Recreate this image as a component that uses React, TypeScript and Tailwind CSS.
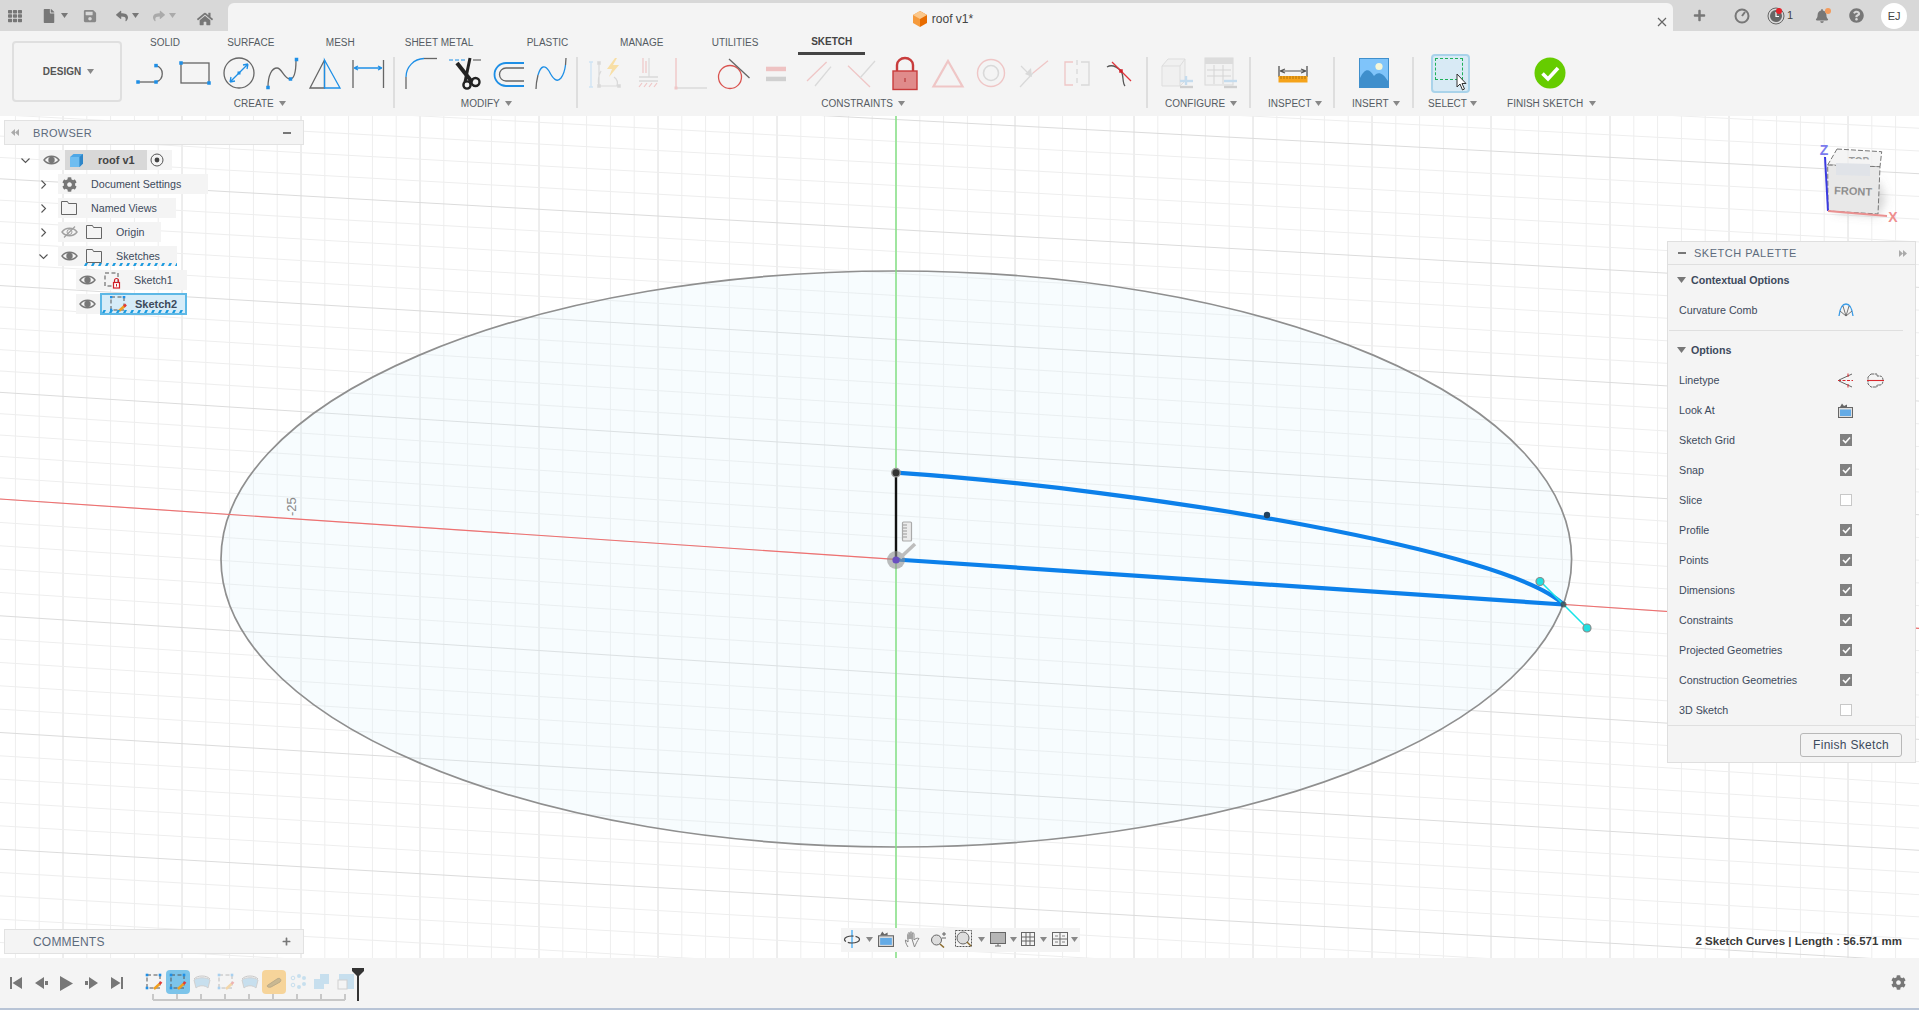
import React from "react";
import { FaTh, FaFile, FaSave, FaReply, FaShare, FaHome, FaPlus, FaBell, FaQuestionCircle, FaCog } from "react-icons/fa";

const B = "#1e8fe6";
const G = "#666666";
const RF = "#efc6c6";
const GF = "#d9d9d9";

function Caret({ c = "#888888" }: { c?: string }) {
  return (
    <svg width="7" height="5" viewBox="0 0 7 5" className="flex-none">
      <path d="M0 0H7L3.5 5Z" fill={c} />
    </svg>
  );
}

function Tool({ children, narrow }: { children: React.ReactNode; narrow?: boolean }) {
  return (
    <div className={"flex h-10 flex-none items-center justify-center " + (narrow ? "w-[42.9px]" : "w-[43.3px]")}>
      <svg width="32" height="32" viewBox="0 0 32 32" fill="none" className="overflow-visible">
        {children}
      </svg>
    </div>
  );
}

function Sq({ x, y, s = 3.5, c = B }: { x: number; y: number; s?: number; c?: string }) {
  return <rect x={x - s / 2} y={y - s / 2} width={s} height={s} fill={c} />;
}

function Group({ className, labelClass, label, children, caretGap }: { className: string; labelClass: string; label: string; children: React.ReactNode; caretGap?: string }) {
  return (
    <div className={"flex flex-none flex-col " + className}>
      <div className="flex h-10 items-center">{children}</div>
      <div className={"flex h-5 items-center whitespace-nowrap text-[10px] text-[#555b62] " + labelClass}>
        <span className={caretGap ?? "mr-[5px]"}>{label}</span>
        <Caret />
      </div>
    </div>
  );
}

function Divider({ className }: { className: string }) {
  return <div className={"mt-1 h-[51px] w-0.5 flex-none bg-[#dedede] " + className} />;
}

function Tab({ w, children, active }: { w: string; children: string; active?: boolean }) {
  return (
    <div className={"flex h-[22px] flex-none items-start justify-center " + w}>
      {active ? (
        <span className="flex h-6 w-[67px] items-center justify-center border-b-[3px] border-[#444444] text-[10px] font-bold text-[#444444]">{children}</span>
      ) : (
        <span className="flex h-[22px] items-center text-[10px] text-[#555b62]">{children}</span>
      )}
    </div>
  );
}

function Eye({ off }: { off?: boolean }) {
  const c = off ? "#a0a0a0" : "#777777";
  return (
    <svg width="17" height="12" viewBox="0 0 17 12" fill="none">
      <path d="M1 6C4.5 1 12.5 1 16 6C12.5 11 4.5 11 1 6Z" stroke={c} strokeWidth="1.4" />
      {off ? <path d="M3 11.5L14 .5" stroke={c} strokeWidth="1.2" /> : <circle cx="8.5" cy="6" r="3.2" fill={c} />}
      {off && <circle cx="8.5" cy="6" r="2.5" stroke={c} />}
    </svg>
  );
}

function Folder() {
  return (
    <svg width="16" height="14" viewBox="0 0 16 14" fill="none">
      <path d="M.5 .5H6.5L7.5 2.5H15.5V13.5H.5Z" stroke="#666666" strokeWidth="1" />
    </svg>
  );
}

function Hatch({ className }: { className: string }) {
  const xs = Array.from({ length: 14 }, (_, i) => i * 7);
  return (
    <svg width="96" height="3" viewBox="0 0 96 3" className={"absolute overflow-hidden " + className}>
      {xs.map((x) => (
        <path key={x} d={`M${x} 3L${x + 1.5} 0H${x + 4}L${x + 2.5} 3Z`} fill="#1c9be0" />
      ))}
    </svg>
  );
}

function SketchIcon({ lock, selected }: { lock?: boolean; selected?: boolean }) {
  return (
    <svg width="17" height="17" viewBox="0 0 17 17" fill="none">
      <rect x="1" y="1" width="13" height="13" stroke="#555555" strokeDasharray="4 2.5" />
      {selected ? (
        <>
          <Sq x={1} y={1} s={2.6} />
          <Sq x={14} y={1} s={2.6} />
          <Sq x={1} y={14} s={2.6} />
          <path d="M9 15L15 9.5" stroke="#f0a020" strokeWidth="2.5" />
          <path d="M14 10.5L16 8.5" stroke="#e23a3a" strokeWidth="2.5" />
        </>
      ) : (
        <>
          <path d="M10.5 10.5V8.5A2 2 0 0 1 14.5 8.5V10.5" stroke="#d0202a" strokeWidth="1.2" />
          <rect x="9.5" y="10.5" width="6" height="5.5" fill="#fff" stroke="#d0202a" strokeWidth="1.2" />
          <path d="M12.5 12V14.5" stroke="#d0202a" />
        </>
      )}
    </svg>
  );
}

function Grid() {
  const v: React.ReactNode[] = [];
  for (let k = -38; k <= 43; k++) {
    const x = 896 + k * 23.8;
    if (x < 0 || x > 1919) continue;
    v.push(<line key={"v" + k} x1={x} y1={116} x2={x} y2={958} stroke={k % 5 === 0 ? "#dcdcdc" : "#eeeeee"} strokeWidth="1" />);
  }
  const h: React.ReactNode[] = [];
  for (let n = -25; n <= 20; n++) {
    const k = n / 5;
    const step = k < 0 ? 110 : 114;
    const slope = k < 0 ? 0.0674 + 0.0036 * k : 0.0674 - 0.003 * k;
    const yc = 559.5 + k * step;
    h.push(<line key={"h" + n} x1={0} y1={yc - 896 * slope} x2={1919} y2={yc + 1023 * slope} stroke={n % 5 === 0 ? "#dcdcdc" : "#eeeeee"} strokeWidth="1" />);
  }
  return (
    <>
      {v}
      {h}
    </>
  );
}

function Viewport() {
  return (
    <svg className="absolute inset-0 h-full w-full" viewBox="0 116 1919 842" fill="none">
      <defs>
        <filter id="cubeShadow" x="-40%" y="-40%" width="180%" height="180%">
          <feGaussianBlur stdDeviation="5" />
        </filter>
        <clipPath id="topFace">
          <path d="M1837 149L1881.7 151.7L1880 160L1830 158Z" />
        </clipPath>
      </defs>
      <Grid />
      <ellipse cx="896.3" cy="559" rx="675.3" ry="288" fill="#dcf1fb" fillOpacity="0.24" stroke="#8f8f8f" strokeWidth="1.7" />
      <line x1="0" y1="499" x2="1919" y2="628.4" stroke="#f07070" strokeWidth="1.2" />
      <line x1="896" y1="116" x2="896" y2="958" stroke="#7fe27f" strokeWidth="1.4" />
      <text x="0" y="0" transform="translate(296 516) rotate(-90)" fill="#888888" fontSize="13">-25</text>
      <path d="M896 472.7V559.5" stroke="#111111" strokeWidth="2.4" />
      <path d="M896 472.7C1150 490 1510 551 1563.5 604.5" stroke="#0c80ea" strokeWidth="4.2" />
      <path d="M896 559.5L1563.5 604.5" stroke="#0c80ea" strokeWidth="4.2" />
      <path d="M1540 581L1587 628" stroke="#18e4e8" strokeWidth="1.6" />
      <circle cx="1540" cy="581.5" r="4" fill="#20dfe0" stroke="#8a8a8a" strokeWidth="1.2" />
      <circle cx="1587" cy="628" r="4" fill="#20dfe0" stroke="#8a8a8a" strokeWidth="1.2" />
      <circle cx="1563.5" cy="604.5" r="3" fill="#444444" fillOpacity="0.75" />
      <circle cx="1267" cy="515" r="3.2" fill="#22425f" />
      <circle cx="896" cy="472.7" r="4.2" fill="#333333" stroke="#999999" strokeWidth="1.4" />
      <circle cx="896" cy="560" r="9" fill="#8f8f8f" fillOpacity="0.6" />
      <circle cx="896" cy="560" r="3.6" fill="#6a4fc0" />
      <path d="M900 558L915 544" stroke="#bdbdbd" strokeWidth="3.5" />
      <rect x="902.5" y="522" width="9" height="19" rx="1" fill="#ebebeb" stroke="#aaaaaa" strokeWidth="1.2" />
      <path d="M903 525H907M903 528H907M903 531H907M903 534H907M903 537H907" stroke="#999999" strokeWidth="1" />
      {/* view cube */}
      <path d="M1832 212L1878 216L1886 200L1878 180Z" fill="#777777" fillOpacity="0.3" filter="url(#cubeShadow)" />
      <path d="M1837 149L1881.7 151.7L1880 166.7L1827.7 165Z" fill="#efefef" fillOpacity="0.7" stroke="#777777" strokeDasharray="5 2" />
      <path d="M1827.7 165L1880 166.7L1878 214L1828 211Z" fill="#e8e8e8" stroke="#777777" strokeDasharray="5 2" />
      <path d="M1836 163L1870 164V176L1836 175Z" fill="#e0e3e8" />
      <g clipPath="url(#topFace)">
        <text x="1859" y="165" textAnchor="middle" fontSize="10" fontWeight="700" fill="#9a9a9a">TOP</text>
      </g>
      <text x="1853" y="195" textAnchor="middle" fontSize="11" fontWeight="700" fill="#8f8f8f" transform="rotate(2 1853 195)">FRONT</text>
      <path d="M1825 157L1828 211" stroke="#3a3ae0" strokeWidth="2" />
      <path d="M1828 211L1887 216" stroke="#ea9090" strokeWidth="2" />
      <text x="1824" y="155" textAnchor="middle" fontSize="14" fontWeight="700" fill="#7b7bee">Z</text>
      <text x="1893" y="222" textAnchor="middle" fontSize="14" fontWeight="700" fill="#ee8f8f">X</text>
    </svg>
  );
}

function TopBar() {
  return (
    <div className="flex h-[31px] flex-none bg-[#d8d8d8]">
      <div className="flex w-[228px] flex-none items-center text-[#777777]">
        <FaTh className="ml-2 flex-none text-[14px]" />
        <FaFile className="ml-[20px] flex-none text-[14px]" />
        <span className="ml-[5px]"><Caret c="#777777" /></span>
        <FaSave className="ml-[15px] flex-none text-[14px] text-[#888888]" />
        <FaReply className="ml-[19px] flex-none text-[12px]" />
        <span className="ml-[4px]"><Caret c="#777777" /></span>
        <FaShare className="ml-[14px] flex-none text-[12px] text-[#aaaaaa]" />
        <span className="ml-[4px]"><Caret c="#aaaaaa" /></span>
        <FaHome className="ml-[21px] mt-[6px] flex-none text-[16px]" />
      </div>
      <div className="mt-[3px] flex w-[1445px] flex-none items-center justify-center rounded-t-md bg-[#f4f4f4]">
        <svg width="14" height="16" viewBox="0 0 14 16" className="mr-[5px] mt-[3px]">
          <path d="M7 0L14 4V12L7 16Z" fill="#e86c00" />
          <path d="M7 0L0 4V12L7 16Z" fill="#f59a3c" />
          <path d="M7 0L14 4L7 8L0 4Z" fill="#fbc78a" />
        </svg>
        <span className="mr-[15px] mt-[3px] text-xs text-[#444444]">roof v1*</span>
      </div>
      <div className="relative flex flex-1 items-center text-[#777777]">
        <svg width="10" height="10" viewBox="0 0 10 10" className="absolute -left-[16px] top-[17px]">
          <path d="M1 1L9 9M9 1L1 9" stroke="#666666" strokeWidth="1.2" />
        </svg>
        <FaPlus className="ml-[20px] flex-none text-[13px]" />
        <svg width="16" height="16" viewBox="0 0 16 16" className="ml-[28px] flex-none">
          <circle cx="8" cy="8" r="6.5" fill="none" stroke="#777777" strokeWidth="2" />
          <path d="M8 8L11 4" stroke="#777777" strokeWidth="2" />
        </svg>
        <svg width="18" height="18" viewBox="0 0 18 18" className="ml-[17px] flex-none">
          <circle cx="9" cy="9" r="8" fill="none" stroke="#666666" />
          <circle cx="9" cy="9" r="6" fill="#666666" />
          <path d="M9 5V9.5H12" stroke="#fff" strokeWidth="1.2" fill="none" />
          <circle cx="12" cy="4" r="3" fill="#e4232a" />
        </svg>
        <span className="ml-[2px] text-[11px] text-[#444444]">1</span>
        <span className="relative ml-[22px] flex-none">
          <FaBell className="text-[14px]" />
          <span className="absolute -right-[2px] -top-[1px] h-[6px] w-[6px] rounded-full bg-[#f39b5c]" />
        </span>
        <FaQuestionCircle className="ml-[20px] flex-none text-[15px]" />
        <div className="ml-[17px] mt-[1px] flex h-[26px] w-[26px] flex-none items-center justify-center rounded-full bg-white text-[11px] text-[#444444]">EJ</div>
      </div>
    </div>
  );
}

function Toolbar() {
  return (
    <div className="relative flex h-[85px] flex-none bg-[#f4f4f4]">
      <div className="ml-[11.5px] mt-[10px] flex h-[61px] w-[110px] flex-none items-center justify-center gap-[6px] rounded border-2 border-[#dfdfdf] pl-1 text-[10px] font-bold text-[#555555]">
        <span>DESIGN</span>
        <Caret />
      </div>
      <div className="ml-[0.5px] flex flex-col">
        <div className="flex h-[22px]">
          <Tab w="w-[86px]">SOLID</Tab>
          <Tab w="w-[85.5px]">SURFACE</Tab>
          <Tab w="w-[93.5px]">MESH</Tab>
          <Tab w="w-[104px]">SHEET METAL</Tab>
          <Tab w="w-[113px]">PLASTIC</Tab>
          <Tab w="w-[75.5px]">MANAGE</Tab>
          <Tab w="w-[111px]">UTILITIES</Tab>
          <Tab w="w-[82.5px]" active>SKETCH</Tab>
        </div>
        <div className="flex">
          <Group className="ml-[8.35px] w-[261.5px]" labelClass="pl-[103.5px]" label="CREATE">
            <Tool>
              <path d="M2 25H20" stroke={G} strokeWidth="1.3" />
              <path d="M20 8.6A8.5 8.5 0 0 1 20 25" stroke={G} strokeWidth="1.3" />
              <Sq x={2} y={25} />
              <Sq x={20} y={25} />
              <Sq x={20} y={8.6} />
            </Tool>
            <Tool>
              <rect x="2" y="6" width="28" height="20" stroke={G} strokeWidth="1.3" />
              <Sq x={2} y={6} />
              <Sq x={30} y={26} />
            </Tool>
            <Tool>
              <circle cx="16" cy="16" r="15" stroke={G} strokeWidth="1.3" />
              <path d="M7 25L25 7M7 25L8 20M7 25L12 24M25 7L24 12M25 7L20 8" stroke={B} strokeWidth="1.3" />
              <Sq x={16} y={16} s={3} />
            </Tool>
            <Tool>
              <path d="M2 30C2 18 6 11 11 11C16 11 18 22 24 22C28 22 30 14 30 3" stroke={G} strokeWidth="1.3" />
              <Sq x={2} y={30.5} />
              <Sq x={24.5} y={22} />
              <Sq x={30.5} y={2.5} />
            </Tool>
            <Tool>
              <path d="M15.5 3L1 31H15.5Z" stroke={G} strokeWidth="1.3" />
              <path d="M15.5 3L31 31H15.5Z" stroke={B} strokeWidth="1.3" />
            </Tool>
            <Tool>
              <path d="M1 3V31M31.5 3V31" stroke={G} strokeWidth="1.3" />
              <path d="M2 11H30M2 11L6 9M2 11L6 13M30 11L26 9M30 11L26 13" stroke={B} strokeWidth="1.3" />
            </Tool>
          </Group>
          <Divider className="ml-[1.15px]" />
          <Group className="ml-[4.85px] w-[173.2px]" labelClass="pl-[61px]" label="MODIFY">
            <Tool>
              <path d="M1 32V20" stroke={G} strokeWidth="1.3" />
              <path d="M1 20A18.5 18.5 0 0 1 19 1.5" stroke={B} strokeWidth="1.3" />
              <path d="M19 1.5H32" stroke={G} strokeWidth="1.3" />
            </Tool>
            <Tool>
              <path d="M0 3H17" stroke={B} strokeWidth="1.2" strokeDasharray="4 2" />
              <path d="M24 3H32" stroke={G} strokeWidth="1.2" />
              <path d="M8 6L23 25" stroke="#222222" strokeWidth="4" />
              <path d="M21 1L16 25" stroke="#222222" strokeWidth="3" />
              <circle cx="26.5" cy="25" r="4" stroke="#222222" strokeWidth="2.4" />
              <circle cx="18" cy="28" r="3.6" stroke="#222222" strokeWidth="2.4" />
            </Tool>
            <Tool>
              <path d="M32 6H14A11.5 11.5 0 0 0 14 29H32" stroke={B} strokeWidth="1.8" />
              <path d="M32 11H14A6.5 6.5 0 0 0 14 24H32" stroke={G} strokeWidth="1.3" />
            </Tool>
            <Tool>
              <path d="M1 32C1 26 2 22 3 18M30.5 8L31 1" stroke={G} strokeWidth="1.3" />
              <path d="M3 18C6 8 10 8 14 14C18 22 22 26 26 21C29 17 30 12 30.5 8" stroke={B} strokeWidth="1.3" />
            </Tool>
          </Group>
          <Divider className="ml-[3px]" />
          <Group className="ml-[5.35px] w-[563px]" labelClass="pl-[238px]" label="CONSTRAINTS">
            <Tool narrow>
              <path d="M2 5V30M0 5H4M0 30H4" stroke="#cfe4f4" strokeWidth="1.3" />
              <path d="M10 7V29H30M10 29A20 20 0 0 1 12 14M25 20A8 8 0 0 1 28 29" stroke={GF} strokeWidth="1.2" />
              <Sq x={10} y={6} c={GF} />
              <Sq x={10} y={29} c={GF} />
              <Sq x={30} y={29} c={GF} />
              <path d="M26 1L18 12H23L20 20L30 8H24L28 1Z" fill="#f8dfa6" />
            </Tool>
            <Tool narrow>
              <path d="M11 1V16M14 4V16" stroke={RF} strokeWidth="1.2" />
              <path d="M17 1V20" stroke={GF} strokeWidth="1.2" />
              <path d="M7 20H26M7 24H26" stroke={GF} strokeWidth="1.3" />
              <path d="M7 30L10 26M12 30L15 26M17 30L20 26M22 30L25 26" stroke={RF} strokeWidth="1.2" />
            </Tool>
            <Tool narrow>
              <path d="M1 1V30" stroke={RF} strokeWidth="1.4" />
              <path d="M2 31H32" stroke={GF} strokeWidth="1.4" />
              <Sq x={1} y={31} s={3} c={RF} />
            </Tool>
            <Tool narrow>
              <circle cx="13" cy="20" r="11.5" stroke="#d9534f" strokeWidth="1.3" />
              <path d="M12 2L32.5 21" stroke="#666666" strokeWidth="1.3" />
            </Tool>
            <Tool narrow>
              <rect x="6" y="9.7" width="20" height="4.5" fill="#eec2c2" />
              <rect x="6" y="19.7" width="20" height="4.5" fill="#d0d0d0" />
            </Tool>
            <Tool narrow>
              <path d="M4 24L23.6 5" stroke={RF} strokeWidth="1.3" />
              <path d="M12 29L28 9.7" stroke={GF} strokeWidth="1.3" />
            </Tool>
            <Tool narrow>
              <path d="M2 8.7L24 30" stroke={RF} strokeWidth="1.3" />
              <path d="M14 21L29 4" stroke={GF} strokeWidth="1.3" />
            </Tool>
            <Tool narrow>
              <path d="M8 14V8A8 7 0 0 1 24 8V14" stroke="#c83c3c" strokeWidth="2.4" />
              <rect x="4" y="14" width="24" height="18.5" fill="#e08b8b" stroke="#c83c3c" strokeWidth="1.4" />
              <path d="M16 21V25" stroke="#b02a2a" strokeWidth="1" />
            </Tool>
            <Tool narrow>
              <path d="M16 4L30.5 29.5H1.5Z" stroke={RF} strokeWidth="2.2" />
            </Tool>
            <Tool narrow>
              <circle cx="16" cy="16" r="13.5" stroke={RF} strokeWidth="1.4" />
              <circle cx="16" cy="16" r="7.5" stroke={GF} strokeWidth="1.6" />
            </Tool>
            <Tool narrow>
              <path d="M2 30L15 16" stroke={GF} strokeWidth="1.3" />
              <path d="M15 16L30 3.7" stroke={RF} strokeWidth="1.3" />
              <path d="M3 9L9 15" stroke={GF} strokeWidth="1.3" />
              <path d="M7 17L13 11L14 20Z" fill={GF} />
            </Tool>
            <Tool narrow>
              <path d="M16 3V29" stroke={GF} strokeWidth="1.3" strokeDasharray="5 4" />
              <path d="M12 5H4V28H12" stroke={RF} strokeWidth="1.3" />
              <path d="M20 5H28V28H20" stroke={GF} strokeWidth="1.3" />
            </Tool>
            <Tool narrow>
              <path d="M4 10C9 7 14 10 18 14C21 18 19 26 22 29" stroke="#555555" strokeWidth="1.3" />
              <path d="M9 5L28 24" stroke="#e0353b" strokeWidth="1.3" />
              <Sq x={18} y={14} c="#d0202a" />
            </Tool>
          </Group>
          <Divider className="" />
          <Group className="ml-[6.7px] w-[88px]" labelClass="pl-[10px]" label="CONFIGURE">
            <Tool>
              <path d="M1 9L7 2H24V24L19 29H1Z" fill="#f0f0f0" stroke="#dddddd" />
              <path d="M1 9H19V29M19 9L24 2" stroke="#dddddd" />
              <path d="M19 24H32" stroke="#c5dcee" strokeWidth="2.4" />
              <path d="M25 19V28" stroke="#c5dcee" strokeWidth="2.4" />
              <path d="M19 30H32" stroke="#cfcfcf" strokeWidth="2.4" />
            </Tool>
            <Tool>
              <rect x="1" y="1" width="28" height="27" fill="#f2f2f2" stroke="#d8d8d8" />
              <rect x="1" y="1" width="28" height="6" fill="#dcdcdc" />
              <path d="M3 13H27M3 19H27M10 8V27M19 8V27" stroke="#d4d4d4" />
              <path d="M20 24H33" stroke="#c5dcee" strokeWidth="2.4" />
              <path d="M20 30H33" stroke="#cfcfcf" strokeWidth="2.4" />
            </Tool>
          </Group>
          <Divider className="ml-1.5" />
          <Group className="ml-[15px] w-[66px]" labelClass="pl-[2px]" label="INSPECT" caretGap="mr-[4px]">
            <div className="ml-[4.85px]">
              <Tool>
                <path d="M2 9V20M30 9V20" stroke="#555555" strokeWidth="1.3" />
                <path d="M3 14H29M3 14L8 12M3 14L8 16M29 14L24 12M29 14L24 16" stroke="#555555" strokeWidth="1.2" />
                <rect x="1.5" y="19" width="29" height="6.5" fill="#f5a31a" />
                <path d="M4 19V22M7 19V22M10 19V22M13 19V22M16 19V22M19 19V22M22 19V22M25 19V22M28 19V22" stroke="#a56a06" strokeWidth=".8" />
              </Tool>
            </div>
          </Group>
          <Divider className="ml-px" />
          <Group className="ml-[15px] w-[62px]" labelClass="pl-[2px]" label="INSERT" caretGap="mr-[4px]">
            <div className="ml-[1.85px]">
              <Tool>
                <rect x="1.5" y="1.5" width="29" height="29" fill="#7fc4fa" stroke="#3f8fcc" />
                <path d="M2 30V21C7 11 11 11 16 19C19 15 24 14 30 24V30Z" fill="#3f8fcc" />
                <circle cx="21" cy="9.5" r="3.6" fill="#f4f6d8" />
              </Tool>
            </div>
          </Group>
          <Divider className="" />
          <Group className="ml-[11px] w-[50px]" labelClass="pl-[3px]" label="SELECT" caretGap="mr-[3px]">
            <div className="relative ml-1.5 mt-px h-[39px] w-[39px] flex-none rounded-sm border-2 border-[#a9d3ea] bg-[#d8eaf5]">
              <div className="ml-[2px] mt-[2px] h-[22px] w-[28px] border border-dashed border-[#1eb15a]" />
              <svg width="11" height="18" viewBox="0 0 11 18" className="absolute left-[23px] top-[17px]">
                <path d="M1 1V14L4 11L6.5 17L8.5 16L6 10.5H10Z" fill="#fff" stroke="#333333" strokeWidth="1" />
              </svg>
            </div>
          </Group>
          <Group className="ml-8 w-[95px]" labelClass="" label="FINISH SKETCH" caretGap="mr-[6px]">
            <div className="ml-[21.35px]">
              <Tool>
                <circle cx="16" cy="16" r="15.5" fill="#66cc00" />
                <path d="M8.5 16.5L14 22L24 11" stroke="#fff" strokeWidth="3.6" />
              </Tool>
            </div>
          </Group>
        </div>
      </div>
    </div>
  );
}

function Chev({ down }: { down?: boolean }) {
  return (
    <svg width="9" height="9" viewBox="0 0 9 9" fill="none">
      <path d={down ? "M.5 2.5L4.5 6.5L8.5 2.5" : "M2.5 .5L6.5 4.5L2.5 8.5"} stroke="#555555" strokeWidth="1.1" />
    </svg>
  );
}

function IconBox({ className, children }: { className: string; children: React.ReactNode }) {
  return <span className={"flex flex-none items-center justify-center " + className}>{children}</span>;
}

function Browser() {
  const txt = "text-[10.7px] text-[#3d4a5c]";
  return (
    <div className="absolute left-1 top-1 flex w-[300px] flex-col">
      <div className="flex h-[25px] items-center border border-[#e2e2e2] bg-[#f4f4f4]">
        <svg width="8" height="7" viewBox="0 0 8 7" className="ml-[6px]">
          <path d="M4 0V7L0 3.5ZM8 0V7L4 3.5Z" fill="#aaaaaa" />
        </svg>
        <span className="ml-[14px] mt-px text-[11px] tracking-[0.3px] text-[#5d6b7c]">BROWSER</span>
        <span className="ml-auto mr-3 h-0.5 w-2 bg-[#777777]" />
      </div>
      <div className="mt-[3px] flex flex-col">
        <div className="flex h-6 items-center">
          <IconBox className="w-9 justify-end pr-2.5"><Chev down /></IconBox>
          <div className="flex h-5 w-[132px] items-center bg-[#f4f4f4]">
            <IconBox className="w-[23px]"><Eye /></IconBox>
            <div className="ml-[2px] flex h-5 w-[82px] flex-none items-center bg-[#d8d8d8]">
              <svg width="15" height="15" viewBox="0 0 15 15" className="ml-[4px] flex-none">
                <path d="M1 4L4.5 1H14V10.5L10.5 14H1Z" fill="#4ea7e6" />
                <path d="M1 4H10.5V14H1Z" fill="#6fbdf0" />
                <path d="M10.5 4L14 1V10.5L10.5 14Z" fill="#2f86c8" />
              </svg>
              <span className="ml-[14px] text-[11px] font-bold text-[#444444]">roof v1</span>
            </div>
            <svg width="14" height="14" viewBox="0 0 14 14" className="ml-[3px] flex-none">
              <circle cx="7" cy="7" r="6" fill="none" stroke="#555555" />
              <circle cx="7" cy="7" r="2.4" fill="#444444" />
            </svg>
          </div>
        </div>
        <div className="flex h-6 items-center">
          <IconBox className="w-[54px] justify-end pr-2.5"><Chev /></IconBox>
          <div className="flex h-5 w-[150px] items-center bg-[#f4f4f4]">
            <IconBox className="w-[22px]"><FaCog className="text-[15px] text-[#777777]" /></IconBox>
            <span className={"ml-[11px] " + txt}>Document Settings</span>
          </div>
        </div>
        <div className="flex h-6 items-center">
          <IconBox className="w-[54px] justify-end pr-2.5"><Chev /></IconBox>
          <div className="flex h-5 w-[118px] items-center bg-[#f4f4f4]">
            <IconBox className="w-[22px]"><Folder /></IconBox>
            <span className={"ml-[11px] " + txt}>Named Views</span>
          </div>
        </div>
        <div className="flex h-6 items-center">
          <IconBox className="w-[54px] justify-end pr-2.5"><Chev /></IconBox>
          <div className="flex h-5 w-[103px] items-center bg-[#f4f4f4]">
            <IconBox className="w-[22px]"><Eye off /></IconBox>
            <IconBox className="ml-[3px] w-[22px]"><Folder /></IconBox>
            <span className={"ml-[11px] " + txt}>Origin</span>
          </div>
        </div>
        <div className="flex h-6 items-center">
          <IconBox className="w-[54px] justify-end pr-2.5"><Chev down /></IconBox>
          <div className="relative flex h-5 w-[119px] items-center overflow-hidden bg-[#f4f4f4]">
            <IconBox className="w-[22px]"><Eye /></IconBox>
            <IconBox className="ml-[3px] w-[22px]"><Folder /></IconBox>
            <span className={"ml-[11px] " + txt}>Sketches</span>
            <Hatch className="bottom-0 left-[26px]" />
          </div>
        </div>
        <div className="flex h-6 items-center">
          <div className="w-[72px] flex-none" />
          <div className="flex h-5 w-[111px] items-center bg-[#f4f4f4]">
            <IconBox className="w-[22px]"><Eye /></IconBox>
            <IconBox className="ml-[3px] w-[22px]"><SketchIcon lock /></IconBox>
            <span className={"ml-[11px] " + txt}>Sketch1</span>
          </div>
        </div>
        <div className="flex h-6 items-center">
          <div className="w-[72px] flex-none" />
          <div className="flex h-5 w-6 flex-none items-center bg-[#f4f4f4]">
            <IconBox className="w-[22px]"><Eye /></IconBox>
          </div>
          <div className="relative flex h-[22px] w-[87px] flex-none items-center overflow-hidden border-2 border-[#5db8e6] bg-[#d6ecf8]">
            <IconBox className="ml-[6px] w-[20px]"><SketchIcon selected /></IconBox>
            <span className="ml-[7px] text-[11px] font-bold text-[#3d4a5c]">Sketch2</span>
            <Hatch className="bottom-0 left-0" />
          </div>
        </div>
      </div>
    </div>
  );
}

function CheckRow({ label, checked = true }: { label: string; checked?: boolean }) {
  return (
    <div className="flex h-[30px] items-center pl-[11px] text-[10.7px] text-[#3d4a5c]">
      <span className="w-[161px] flex-none">{label}</span>
      {checked ? (
        <span className="flex h-3 w-3 items-center justify-center bg-[#808080]">
          <svg width="9" height="8" viewBox="0 0 9 8" fill="none">
            <path d="M1 4L3.5 6.5L8 1.5" stroke="#fff" strokeWidth="1.6" />
          </svg>
        </span>
      ) : (
        <span className="h-3 w-3 border border-[#c8c8c8] bg-white" />
      )}
    </div>
  );
}

function Section({ label }: { label: string }) {
  return (
    <div className="flex h-[30px] items-center pl-[9px] text-[10.7px] font-bold text-[#3d4a5c]">
      <svg width="9" height="6" viewBox="0 0 9 6" className="flex-none">
        <path d="M0 0H9L4.5 6Z" fill="#777777" />
      </svg>
      <span className="ml-[5px]">{label}</span>
    </div>
  );
}

function Palette() {
  return (
    <div className="absolute right-[3px] top-[125px] flex w-[249px] flex-col border border-[#dfdfdf] bg-[#f4f4f4]">
      <div className="flex h-[23px] items-center border-b border-[#dfdfdf]">
        <span className="ml-[10px] h-0.5 w-2 bg-[#777777]" />
        <span className="ml-2 mt-px text-[11px] tracking-[0.5px] text-[#5d6b7c]">SKETCH PALETTE</span>
        <svg width="8" height="7" viewBox="0 0 8 7" className="ml-auto mr-2">
          <path d="M0 0V7L4 3.5ZM4 0V7L8 3.5Z" fill="#aaaaaa" />
        </svg>
      </div>
      <Section label="Contextual Options" />
      <div className="flex h-[30px] items-center pl-[11px] text-[10.7px] text-[#3d4a5c]">
        <span className="w-[159px] flex-none">Curvature Comb</span>
        <svg width="16" height="15" viewBox="0 0 16 15" fill="none">
          <path d="M1 13C2 5 5 1 8 1C11 1 14 5 15 13" stroke="#3a9be6" strokeWidth="1.3" />
          <path d="M2 8L8 13L14 8M5 3L8 13L11 3" stroke="#666666" strokeWidth=".9" />
        </svg>
      </div>
      <div className="ml-px mt-[5px] h-px w-[234px] bg-[#dfdfdf]" />
      <div className="h-1" />
      <Section label="Options" />
      <div className="flex h-[30px] items-center pl-[11px] text-[10.7px] text-[#3d4a5c]">
        <span className="w-[158px] flex-none">Linetype</span>
        <svg width="17" height="17" viewBox="0 0 17 17" fill="none">
          <path d="M1 8.5H16" stroke="#d8282e" strokeWidth="1.1" strokeDasharray="3 1.5" />
          <path d="M15 2L2 8M2 9L15 15" stroke="#666666" />
          <path d="M11 1.5V5M11 12V15.5" stroke="#d8282e" />
        </svg>
        <svg width="17" height="15" viewBox="0 0 17 15" fill="none" className="ml-[13px]">
          <path d="M4 1H10V3H13C15 3 16 5 16 7.5C16 10 15 12 13 12H10V14H4L1 11V4Z" stroke="#666666" strokeDasharray="3 .6" />
          <path d="M0 7.5H17" stroke="#d8282e" strokeWidth="1.1" />
        </svg>
      </div>
      <div className="flex h-[30px] items-center pl-[11px] text-[10.7px] text-[#3d4a5c]">
        <span className="w-[159px] flex-none">Look At</span>
        <svg width="15" height="15" viewBox="0 0 15 15" fill="none">
          <rect x=".5" y="4.5" width="14" height="10" fill="#dddddd" stroke="#666666" />
          <rect x="2" y="6.5" width="11" height="6.5" fill="#64abe6" />
          <path d="M2 4L4 .5L6 3L9 1.5V4Z" fill="#666666" />
        </svg>
      </div>
      <CheckRow label="Sketch Grid" />
      <CheckRow label="Snap" />
      <CheckRow label="Slice" checked={false} />
      <CheckRow label="Profile" />
      <CheckRow label="Points" />
      <CheckRow label="Dimensions" />
      <CheckRow label="Constraints" />
      <CheckRow label="Projected Geometries" />
      <CheckRow label="Construction Geometries" />
      <CheckRow label="3D Sketch" checked={false} />
      <div className="flex h-[37px] items-start justify-end border-t border-[#dfdfdf] pr-[13px] pt-[7px]">
        <button className="h-6 w-[102px] rounded-[3px] border border-[#b8b8b8] text-xs tracking-[0.3px] text-[#3d4a5c]">Finish Sketch</button>
      </div>
    </div>
  );
}

function NavBar() {
  return (
    <div className="absolute left-[841px] top-[812px] flex h-6 w-[239px] items-center bg-[#f4f4f4] pb-[2px]">
      <IconBox className="w-[22px]">
        <svg width="18" height="18" viewBox="0 0 18 18" fill="none">
          <path d="M9 0V18" stroke="#7fc4f5" strokeWidth="2" />
          <ellipse cx="9" cy="9.5" rx="7.5" ry="3.5" stroke="#444444" strokeWidth="1.2" strokeDasharray="13 2" />
        </svg>
      </IconBox>
      <IconBox className="w-3"><Caret /></IconBox>
      <IconBox className="w-[22px]">
        <svg width="16" height="16" viewBox="0 0 15 15" fill="none">
          <rect x=".5" y="4.5" width="14" height="10" fill="#dddddd" stroke="#666666" />
          <rect x="2" y="6.5" width="11" height="6.5" fill="#64abe6" />
          <path d="M2 4L4 .5L6 3L9 1.5V4Z" fill="#666666" />
        </svg>
      </IconBox>
      <IconBox className="ml-1 w-[22px]">
        <svg width="17" height="17" viewBox="0 0 17 17" fill="none">
          <path d="M4 16C2 13 1 10 1.5 9L4 11V3.5M4 8V2.5C5 1 6 2 6 3V8M6 8V1.5C7 .5 8 1 8 2V8M8 8V2.5C9 1.5 10 2 10 3V9C11 8 13 6.5 15 7.5C13 10 12 13 10.5 16Z" stroke="#888888" strokeWidth="1" />
        </svg>
      </IconBox>
      <IconBox className="ml-1 w-[22px]">
        <svg width="17" height="17" viewBox="0 0 17 17" fill="none">
          <circle cx="6.5" cy="9" r="5" fill="#dddddd" stroke="#666666" />
          <path d="M10 13L14 16.5" stroke="#8a6a2a" strokeWidth="1.5" />
          <path d="M12 3H16M14 1V5M12 7H16" stroke="#555555" strokeWidth=".9" />
        </svg>
      </IconBox>
      <IconBox className="ml-1 w-[22px]">
        <svg width="18" height="18" viewBox="0 0 18 18" fill="none">
          <rect x=".5" y=".5" width="16" height="16" stroke="#555555" strokeDasharray="2 1" />
          <circle cx="8" cy="8" r="6" fill="#dddddd" stroke="#666666" />
          <path d="M12 12L16 16" stroke="#8a6a2a" strokeWidth="1.5" />
        </svg>
      </IconBox>
      <IconBox className="w-3"><Caret /></IconBox>
      <IconBox className="w-[22px]">
        <svg width="16" height="15" viewBox="0 0 16 15" fill="none">
          <rect x=".5" y=".5" width="15" height="11" fill="#b5b5b5" stroke="#666666" />
          <path d="M5 14H11M8 12V14" stroke="#666666" />
        </svg>
      </IconBox>
      <IconBox className="w-2"><Caret /></IconBox>
      <IconBox className="w-[22px]">
        <svg width="14" height="14" viewBox="0 0 14 14" fill="none">
          <rect x=".5" y=".5" width="13" height="13" stroke="#666666" />
          <path d="M5 1V13M9 1V13M1 5H13M1 9H13" stroke="#666666" />
        </svg>
      </IconBox>
      <IconBox className="w-2"><Caret /></IconBox>
      <IconBox className="ml-0.5 w-[22px]">
        <svg width="16" height="14" viewBox="0 0 16 14" fill="none">
          <rect x=".5" y=".5" width="15" height="13" stroke="#666666" />
          <path d="M8 1V13M1 7H15" stroke="#666666" />
          <rect x="3" y="3" width="3" height="2" fill="#bbbbbb" />
          <rect x="10" y="3" width="3" height="2" fill="#bbbbbb" />
          <rect x="3" y="9" width="3" height="2" fill="#bbbbbb" />
          <rect x="10" y="9" width="3" height="2" fill="#bbbbbb" />
        </svg>
      </IconBox>
      <IconBox className="w-1.5"><Caret /></IconBox>
    </div>
  );
}

function TL({ bg, children }: { bg?: string; children: React.ReactNode }) {
  return (
    <div className={"flex h-6 w-6 flex-none items-center justify-center rounded-sm " + (bg ?? "")}>
      <svg width="18" height="18" viewBox="0 0 18 18" fill="none">
        {children}
      </svg>
    </div>
  );
}

function TimelineSketch({ faded }: { faded?: boolean }) {
  return (
    <g opacity={faded ? 0.35 : 1}>
      <rect x="2" y="2" width="13" height="13" stroke="#555555" strokeDasharray="4 2.5" />
      <Sq x={2} y={2} s={2.6} />
      <Sq x={15} y={2} s={2.6} />
      <Sq x={2} y={15} s={2.6} />
      <path d="M9 16L15 10.5" stroke="#f0a020" strokeWidth="2.4" />
      <path d="M14.5 11L16.5 9" stroke="#e23a3a" strokeWidth="2.4" />
    </g>
  );
}

function Dome() {
  return (
    <g>
      <path d="M1 6C4 2 14 2 17 6" stroke="#c9c9c9" />
      <path d="M1 7C4 4 14 4 17 7L15 15C12 12 6 12 3 15Z" fill="#c7dfee" stroke="#d0d0d0" />
    </g>
  );
}

function BottomBar() {
  const ticks = [0, 24, 48, 72, 96, 120, 144, 168, 192];
  return (
    <div className="relative flex h-[52px] flex-none items-center border-b-2 border-[#b8c4d6] bg-[#f4f4f4] pb-0">
      <svg width="12" height="12" viewBox="0 0 12 12" className="ml-[10px] flex-none"><path d="M0 0H2V12H0ZM12 0V12L2.5 6Z" fill="#777777" /></svg>
      <svg width="13" height="12" viewBox="0 0 13 12" className="ml-[13px] flex-none"><path d="M9 0V12L0 6ZM10 4H13V8H10Z" fill="#777777" /></svg>
      <svg width="13" height="15" viewBox="0 0 13 15" className="ml-[12px] flex-none"><path d="M0 0L13 7.5L0 15Z" fill="#777777" /></svg>
      <svg width="13" height="12" viewBox="0 0 13 12" className="ml-[12px] flex-none"><path d="M4 0V12L13 6ZM0 4H3V8H0Z" fill="#777777" /></svg>
      <svg width="12" height="12" viewBox="0 0 12 12" className="ml-[13px] flex-none"><path d="M0 0V12L9.5 6ZM10 0H12V12H10Z" fill="#777777" /></svg>
      <div className="relative ml-[19px] mb-[2px] flex w-[216px] flex-none">
        <TL><TimelineSketch /></TL>
        <TL bg="bg-[#7cc4ea]"><TimelineSketch /></TL>
        <TL><Dome /></TL>
        <TL><TimelineSketch faded /></TL>
        <TL><Dome /></TL>
        <TL bg="bg-[#f6d49a]">
          <path d="M3 12L12 6C15 4 17 7 15 9L6 14C3 15 1 13 3 12Z" fill="#c9b892" stroke="#bbaa88" />
        </TL>
        <TL>
          <circle cx="4" cy="5" r="1.8" stroke="#c7dfee" />
          <circle cx="10" cy="3" r="2" fill="#c7dfee" />
          <circle cx="15" cy="5" r="2" fill="#c7dfee" />
          <circle cx="4" cy="12" r="1.8" stroke="#c7dfee" />
          <circle cx="10" cy="14" r="2" fill="#c7dfee" />
          <circle cx="15" cy="11" r="2" fill="#c7dfee" />
        </TL>
        <TL>
          <path d="M7 1H16V11H11V16H1V6H7Z" fill="#c7dfee" />
        </TL>
        <TL>
          <rect x="2" y="1" width="15" height="15" fill="#c7dfee" />
          <rect x="1" y="7" width="9" height="9" fill="#f4f4f4" stroke="#d0d0d0" />
        </TL>
        <svg width="196" height="7" viewBox="0 0 196 7" className="absolute left-[10px] top-[24px]" fill="none">
          <path d="M1 6H193" stroke="#c8c8c8" strokeWidth="2" />
          {ticks.map((t) => (
            <path key={t} d={`M${t + 1} 0V6`} stroke="#c8c8c8" strokeWidth="2" />
          ))}
        </svg>
        <svg width="12" height="33" viewBox="0 0 12 33" className="absolute left-[210px] -top-[2px]">
          <path d="M0 0H12V3L7 8H5L0 3Z" fill="#333333" />
          <rect x="5" y="7" width="2" height="26" fill="#333333" />
        </svg>
      </div>
      <FaCog className="ml-auto mr-[13px] mb-[2px] flex-none text-[15px] text-[#777777]" />
    </div>
  );
}

export default function App() {
  return (
    <div className="flex h-[1010px] w-full flex-col overflow-hidden bg-white [font-family:'Liberation_Sans',Arial,sans-serif]">
      <TopBar />
      <Toolbar />
      <div className="relative flex-1 overflow-hidden bg-white">
        <Viewport />
        <Browser />
        <Palette />
        <NavBar />
        <div className="absolute bottom-[4px] left-1 flex h-[25px] w-[300px] items-center border border-[#e2e2e2] bg-[#f4f4f4]">
          <span className="ml-[28px] mt-px text-xs tracking-[0.2px] text-[#5d6b7c]">COMMENTS</span>
          <FaPlus className="ml-auto mr-3 text-[9px] text-[#777777]" />
        </div>
        <div className="absolute bottom-[8px] right-[17px] text-[11.5px] font-bold text-[#3a3a3a]">2 Sketch Curves | Length : 56.571 mm</div>
      </div>
      <BottomBar />
    </div>
  );
}
